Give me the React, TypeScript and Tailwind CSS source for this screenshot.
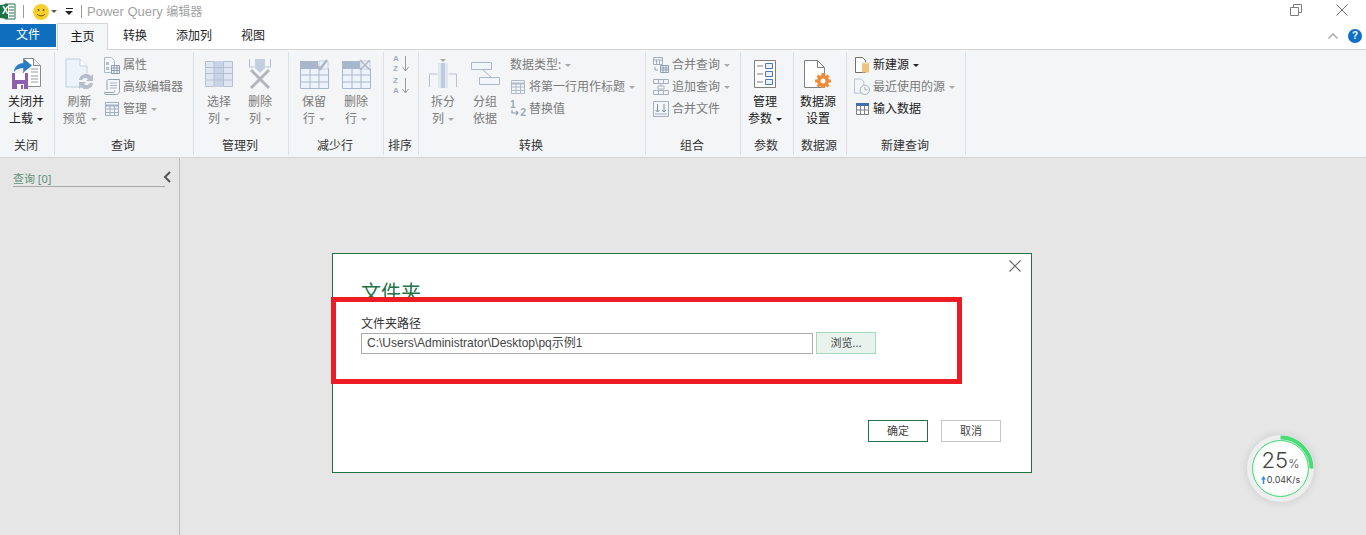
import type { ReactNode } from "react";

const cjk = "font-['Noto_Sans','Noto_Sans_CJK_SC',sans-serif]";

const Arrow = ({ dark }: { dark?: boolean }) => (
  <span
    className={`inline-block ml-[4px] align-middle w-0 h-0 border-x-[3px] border-x-transparent border-t-[3px] ${
      dark ? "border-t-[#222]" : "border-t-[#a9a9a9]"
    }`}
  />
);

// ---- ribbon icons ----
const CloseLoadIcon = () => (
  <svg width="29" height="31" viewBox="0 0 29 31">
    <path d="M11.500.5h10l7 7v21h-17z" fill="#fff" stroke="#8a8a8a" />
    <path d="M21.500.5v7h7" fill="#eee" stroke="#8a8a8a" />
    <path d="M19 11h7M19 14h7M19 18h7M19 21h7M19 24h7" stroke="#9a9a9a" />
    <path d="M2 14c0-5 4-9 10-9V1l8 6.500-8 6.500v-4c-4 0-8 1-10 4z" fill="#2a7cc4" />
    <path d="M0 15h16v16H0z" fill="#8d5fae" />
    <path d="M3 15h10v7H3z" fill="#fff" />
    <path d="M5 26h7v5H5z" fill="#fff" />
    <path d="M9 27h2v4H9z" fill="#8d5fae" />
  </svg>
);
const RefreshIcon = () => (
  <svg width="30" height="32" viewBox="0 0 30 32">
    <path d="M1 1h14l7 7v21H1z" fill="#edf3fb" stroke="#bfcfe2" />
    <path d="M15 1v7h7" fill="#fff" stroke="#bfcfe2" />
    <circle cx="21" cy="23" r="8" fill="#f3f5f7" />
    <path d="M14 22a7 7 0 0 1 12-4l2-2v7h-7l2-2a4 4 0 0 0-6 1zM28 25a7 7 0 0 1-12 4l-2 2v-7h7l-2 2a4 4 0 0 0 6-1z" fill="#b5bec9" />
  </svg>
);
const PropsIcon = () => (
  <svg width="16" height="17" viewBox="0 0 16 17">
    <path d="M.5.5h7l3 3v12h-10z" fill="#f4f7fb" stroke="#aab8cb" />
    <path d="M2 5h3v3H2zM2 10h3v3H2z" fill="#b4c0d0" />
    <path d="M7 8h9v9H7z" fill="#f4f7fb" />
    <path d="M7.500 8.500h8v8h-8zM7.500 11h8M7.500 13.500h8M10 8.500v8M13 8.500v8" fill="none" stroke="#8d9db3" />
  </svg>
);
const AdvEditorIcon = () => (
  <svg width="16" height="16" viewBox="0 0 16 16">
    <path d="M4.500.5h11v11c0 2-1 4-3 4h-11c-1 0-1-1-1-2h9c1 0 1-1 1-2" fill="#f4f7fb" stroke="#93a1b4" />
    <path d="M4.500.5C3 .5 3 2 3 3v8" fill="none" stroke="#93a1b4" />
    <path d="M6 4h7M6 6.500h7M6 9h7" stroke="#a8b4c4" />
  </svg>
);
const GridIcon = ({ stroke = "#a0aec2", fill = "#f2f5fa" }: { stroke?: string; fill?: string }) => (
  <svg width="14" height="14" viewBox="0 0 14 14">
    <path d="M.5.5h13v13H.5z" fill={fill} stroke={stroke} />
    <path d="M.5 3.500h13" stroke={stroke} strokeWidth="2" />
    <path d="M.5 7h13M.5 10.500h13M5 3v11M9.500 3v11" stroke={stroke} />
  </svg>
);
const ChooseColsIcon = () => (
  <svg width="28" height="26" viewBox="0 0 28 26">
    <path d="M.5.5h27v25H.5z" fill="#dfe6f1" stroke="#b5c1d3" />
    <path d="M9 0h10v26H9z" fill="#c8d4e6" />
    <path d="M.5 6.500h27M.5 12.500h27M.5 19h27M9 .5v25M18.500 .5v25" stroke="#b5c1d3" />
  </svg>
);
const RemoveColsIcon = () => (
  <svg width="22" height="30" viewBox="0 0 22 30">
    <path d="M.5 0v8h5M21.500 0v8h-5" fill="none" stroke="#b5c1d3" />
    <path d="M6 0h10v9l-5 5-5-5z" fill="#c3cfe0" />
    <path d="M2 29 20 11M2 11l18 18" stroke="#b1b6bd" strokeWidth="3" />
  </svg>
);
const RowsIcon = ({ mark }: { mark: "check" | "x" }) => (
  <svg width="29" height="30" viewBox="0 0 29 30">
    <path d="M.5 9.500h28v20H.500z" fill="#edf3fb" stroke="#a9b7cc" />
    <path d="M.5 16h28M.5 23h28M10 9.500v20M19 9.500v20" stroke="#a9b7cc" />
    <path d="M0 2h18v8H0z" fill="#a9b7cc" />
    <path d="M19 2h9v8h-9z" fill="#edf3fb" stroke="#c4cfde" />
    {mark === "check" ? (
      <path d="M16 6l4 4 7-9" fill="none" stroke="#aeb8c4" strokeWidth="2.500" />
    ) : (
      <path d="M18 1l10 10M28 1 18 11" stroke="#aeb8c4" strokeWidth="1.500" />
    )}
  </svg>
);
const SortIcon = ({ down }: { down?: boolean }) => (
  <div className="relative w-[16px] h-[16px]">
    <div className="-mt-[2px] text-[8px] leading-[9.5px] font-bold text-[#9fadc0] font-['Liberation_Sans',sans-serif]">
      <div>{down ? "Z" : "A"}</div>
      <div>{down ? "A" : "Z"}</div>
    </div>
    <svg width="7" height="16" viewBox="0 0 7 16" className="absolute left-[9px] top-0">
      <path d="M3.500 0v15M.5 11l3 4 3-4" fill="none" stroke="#9a9a9a" />
    </svg>
  </div>
);
const SplitIcon = () => (
  <svg width="28" height="29" viewBox="0 0 28 29">
    <path d="M.5 28V15h8M27.500 28V15h-8" fill="none" stroke="#b5c1d3" />
    <path d="M9 4h10v25H9z" fill="#dfe6f1" />
    <path d="M12 4h4v25h-4z" fill="#bfcbdd" />
    <path d="M11 0h6l-3 3z" fill="#a9a9a9" />
  </svg>
);
const GroupByIcon = () => (
  <svg width="29" height="25" viewBox="0 0 29 25">
    <path d="M.5 1.500h20v7H.5zM8.500 16.500h20v7h-20z" fill="#f2f6fb" stroke="#a9b7cc" />
    <path d="M12 9l8 7" stroke="#a9b7cc" />
  </svg>
);
const ReplaceIcon = () => (
  <div className="relative w-[16px] h-[18px] text-[#98a7bb] text-[10px] leading-none font-bold font-['Liberation_Sans',sans-serif]">
    <span className="absolute left-0 top-0">1</span>
    <span className="absolute right-0 bottom-0">2</span>
    <svg width="8" height="7" viewBox="0 0 8 7" className="absolute left-[1px] top-[10px]">
      <path d="M1 0v3h6M5 1l2 2-2 2" fill="none" stroke="#8ea0b6" strokeWidth="1.200" />
    </svg>
  </div>
);
const MergeIcon = () => (
  <svg width="16" height="16" viewBox="0 0 16 16">
    <path d="M.5.5h9v7h-9z" fill="#f2f5fa" stroke="#a3afbf" />
    <path d="M.5 3h9M3.500 3v5M6.500 3v5" stroke="#a3afbf" />
    <path d="M7.500 8.500h8v7h-8z" fill="#f2f5fa" stroke="#8fa0b6" />
    <path d="M7.500 11h8M7.500 13h8M10 9v6M13 9v6" stroke="#8fa0b6" />
    <path d="M2 10v3h3" fill="none" stroke="#8fa0b6" />
  </svg>
);
const AppendIcon = () => (
  <svg width="16" height="16" viewBox="0 0 16 16">
    <path d="M.5.5h15v4H.5zM.5 11.500h15v4H.5z" fill="#f2f5fa" stroke="#a3afbf" />
    <path d="M5.500.5v4M10.500.5v4M5.500 11.500v4M10.500 11.500v4" stroke="#a3afbf" />
    <path d="M5 7h6v3H5z" fill="#fff" stroke="#a3afbf" />
    <path d="M8 4v3" stroke="#a3afbf" />
  </svg>
);
const CombineFilesIcon = () => (
  <svg width="16" height="16" viewBox="0 0 16 16">
    <path d="M.5.5h15v15H.5z" fill="#f2f5fa" stroke="#a3afbf" />
    <path d="M4.500 3v8M2.500 9l2 2 2-2M11 3v8M9 9l2 2 2-2" fill="none" stroke="#7f90a7" />
    <path d="M2 13h12" stroke="#a3afbf" />
  </svg>
);
const ParamsIcon = () => (
  <svg width="22" height="28" viewBox="0 0 22 28">
    <path d="M.5.5h21v27H.5z" fill="#fff" stroke="#7f7f7f" />
    <path d="M3 6h6M3 14h6M3 22h6" stroke="#7f7f7f" />
    <path d="M11.500 3.500h7v5h-7zM11.500 11.500h7v5h-7zM11.500 19.500h7v5h-7z" fill="#eaf1fb" stroke="#4a7ab5" />
  </svg>
);
const DataSourceIcon = () => (
  <svg width="28" height="28" viewBox="0 0 28 28">
    <path d="M.5.5h13l7 7v20H.5z" fill="#fff" stroke="#7f7f7f" />
    <path d="M13.500.5v7h7" fill="none" stroke="#7f7f7f" />
    <circle cx="19" cy="21" r="6" fill="#ef8a35" />
    <path d="M19 13v16M11 21h16M13.500 15.500l11 11M24.500 15.500l-11 11" stroke="#ef8a35" strokeWidth="3" />
    <circle cx="19" cy="21" r="2.500" fill="#fff" />
  </svg>
);
const NewSourceIcon = () => (
  <svg width="15" height="16" viewBox="0 0 15 16">
    <path d="M.5.5h7l3 3v12h-10z" fill="#fff" stroke="#6f6f6f" />
    <path d="M7 6h7v9.500H7z" fill="#eec37c" />
    <path d="M7 6c1-1 6-1 7 0-1 1-6 1-7 0z" fill="#f6dfb0" />
  </svg>
);
const RecentIcon = () => (
  <svg width="17" height="18" viewBox="0 0 17 18">
    <path d="M.5.5h7l3 3v12h-10z" fill="#f2f6fb" stroke="#b4c0d0" />
    <circle cx="11.500" cy="12" r="5" fill="#f3f5f7" stroke="#a3afbf" />
    <path d="M11.500 9v3h3" fill="none" stroke="#a3afbf" />
  </svg>
);
const EnterDataIcon = () => (
  <svg width="13" height="12" viewBox="0 0 13 12">
    <path d="M.5.5h12v11H.5z" fill="#fff" stroke="#7f7f7f" />
    <path d="M0 0h13v3H0z" fill="#3f6fa8" />
    <path d="M.5 7h12M4.500 3v8M8.500 3v8" stroke="#7f7f7f" />
  </svg>
);

// ---- ribbon building blocks ----
const Large = ({
  icon,
  lines,
  width,
  arrow,
  dark,
}: {
  icon: ReactNode;
  lines: string[];
  width: string;
  arrow?: boolean;
  dark?: boolean;
}) => (
  <div className={`flex flex-col items-center shrink-0 pt-[3px] ${width}`}>
    <div className="h-[35px] flex items-center justify-center">{icon}</div>
    <div className={`mt-[2px] text-[12px] leading-[17px] text-center ${dark ? "text-[#222]" : "text-[#7a7a7a]"}`}>
      {lines.map((l, i) => (
        <div key={l} className="whitespace-nowrap">
          {l}
          {arrow && i === lines.length - 1 && <Arrow dark={dark} />}
        </div>
      ))}
    </div>
  </div>
);

const Small = ({
  icon,
  label,
  arrow,
  dark,
}: {
  icon?: ReactNode;
  label: string;
  arrow?: boolean;
  dark?: boolean;
}) => (
  <div className={`h-[22px] flex items-center text-[12px] whitespace-nowrap ${dark ? "text-[#222]" : "text-[#7a7a7a]"}`}>
    {icon && <div className="w-[16px] mr-[3px] flex justify-center">{icon}</div>}
    {label}
    {arrow && <Arrow dark={dark} />}
  </div>
);

const Col = ({ children, className = "" }: { children: ReactNode; className?: string }) => (
  <div className={`flex flex-col pt-[1px] ${className}`}>{children}</div>
);

const Group = ({ label, width, children }: { label: string; width: string; children: ReactNode }) => (
  <div className={`${width} shrink-0 flex flex-col border-r border-[#dcdfe3] my-[2px]`}>
    <div className="flex-1 flex pt-[1px]">{children}</div>
    <div className="h-[20px] pr-[2px] text-[12px] leading-[22px] text-center text-[#333]">{label}</div>
  </div>
);

export default function App() {
  return (
    <div className={`relative w-[1366px] h-[535px] overflow-hidden bg-[#e6e6e6] flex flex-col ${cjk}`}>
      {/* title bar */}
      <div className="h-[23px] bg-white flex items-center shrink-0">
        <svg width="17" height="17" viewBox="0 0 17 17" className="-ml-[1px]">
          <path d="M6 1h10v15H6z" fill="#fff" stroke="#217346" />
          <path d="M10 4h5M10 7h5M10 10h5M10 13h5" stroke="#217346" />
          <path d="M0 2l9-1v15l-9-1z" fill="#1f7244" />
        </svg>
        <span className="absolute left-[2px] top-[5px] text-[10px] leading-[12px] font-bold text-white font-['Liberation_Sans',sans-serif]">
          X
        </span>
        <div className="ml-[7px] w-px h-[13px] bg-[#9a9a9a]" />
        <svg width="16" height="16" viewBox="0 0 16 16" className="ml-[9px]">
          <circle cx="8" cy="8" r="8" fill="#f8cf2c" />
          <circle cx="5.500" cy="6" r="1" fill="#6b5410" />
          <circle cx="10.500" cy="6" r="1" fill="#6b5410" />
          <path d="M4 10c2 2.500 6 2.500 8 0" fill="none" stroke="#6b5410" />
        </svg>
        <span className="ml-[2px] w-0 h-0 border-x-[3px] border-x-transparent border-t-[3px] border-t-[#555]" />
        <div className="ml-[8px] flex flex-col items-center gap-[2px]">
          <div className="w-[7px] h-px bg-[#222]" />
          <span className="w-0 h-0 border-x-[4px] border-x-transparent border-t-[4px] border-t-[#222]" />
        </div>
        <div className="ml-[8px] w-px h-[13px] bg-[#9a9a9a]" />
        <div className="ml-[5px] text-[12px] text-[#a3a3a3] font-['Liberation_Sans','Noto_Sans_CJK_SC',sans-serif]">
          <span className="text-[13px]">Power Query</span> 编辑器
        </div>
        <svg width="12" height="12" viewBox="0 0 12 12" className="absolute left-[1290px] top-[4px]">
          <path d="M.5 3.500h8v8h-8zM3.500 3V.5h8v8H9" fill="none" stroke="#7a7a7a" />
        </svg>
        <svg width="12" height="12" viewBox="0 0 12 12" className="absolute left-[1336px] top-[4px]">
          <path d="M.5.5l11 11M11.500.5l-11 11" stroke="#6f6f6f" />
        </svg>
      </div>

      {/* tabs */}
      <div className="h-[27px] bg-white flex items-start border-b border-[#d5d5d5] shrink-0 text-[12px] relative">
        <div className="w-[56px] h-[23px] mt-px bg-[#106ebe] text-white text-center leading-[22px]">文件</div>
        <div className="ml-px w-[51px] h-[27px] bg-[#f3f5f7] border border-b-0 border-[#d5d5d5] text-center leading-[26px] text-[#111]">
          主页
        </div>
        <div className="w-[54px] text-center leading-[26px] text-[#222]">转换</div>
        <div className="w-[64px] text-center leading-[26px] text-[#222]">添加列</div>
        <div className="w-[54px] text-center leading-[26px] text-[#222]">视图</div>
        <svg width="10" height="6" viewBox="0 0 10 6" className="absolute left-[1328px] top-[10px]">
          <path d="M.5 5.500 5 1l4.500 4.500" fill="none" stroke="#a3a3a3" strokeWidth="1.300" />
        </svg>
        <div className="absolute left-[1348px] top-[6px] w-[14px] h-[14px] rounded-full bg-[#0f6fc6] text-white text-[10px] leading-[14px] font-bold text-center font-['Liberation_Sans',sans-serif]">
          ?
        </div>
      </div>

      {/* ribbon */}
      <div className="h-[108px] bg-[#f3f5f7] border-b border-[#d5d5d5] flex shrink-0">
        <Group label="关闭" width="w-[55px]">
          <Large dark width="w-[52px]" icon={<CloseLoadIcon />} lines={["关闭并", "上载"]} arrow />
        </Group>
        <Group label="查询" width="w-[139px]">
          <Large width="w-[49px]" icon={<RefreshIcon />} lines={["刷新", "预览"]} arrow />
          <Col>
            <Small icon={<PropsIcon />} label="属性" />
            <Small icon={<AdvEditorIcon />} label="高级编辑器" />
            <Small icon={<GridIcon />} label="管理" arrow />
          </Col>
        </Group>
        <Group label="管理列" width="w-[95px]">
          <Large width="w-[50px]" icon={<ChooseColsIcon />} lines={["选择", "列"]} arrow />
          <Large width="w-[32px]" icon={<RemoveColsIcon />} lines={["删除", "列"]} arrow />
        </Group>
        <Group label="减少行" width="w-[95px]">
          <Large width="w-[50px]" icon={<RowsIcon mark="check" />} lines={["保留", "行"]} arrow />
          <Large width="w-[34px]" icon={<RowsIcon mark="x" />} lines={["删除", "行"]} arrow />
        </Group>
        <Group label="排序" width="w-[35px]">
          <div className="flex flex-col items-center gap-[6px] w-full pt-[3px]">
            <SortIcon />
            <SortIcon down />
          </div>
        </Group>
        <Group label="转换" width="w-[227px]">
          <Large width="w-[48px]" icon={<SplitIcon />} lines={["拆分", "列"]} arrow />
          <Large width="w-[36px]" icon={<GroupByIcon />} lines={["分组", "依据"]} />
          <Col className="ml-[7px]">
            <Small label="数据类型:" arrow />
            <Small icon={<GridIcon stroke="#b0b9c6" />} label="将第一行用作标题" arrow />
            <Small icon={<ReplaceIcon />} label="替换值" />
          </Col>
        </Group>
        <Group label="组合" width="w-[95px]">
          <Col className="ml-[7px]">
            <Small icon={<MergeIcon />} label="合并查询" arrow />
            <Small icon={<AppendIcon />} label="追加查询" arrow />
            <Small icon={<CombineFilesIcon />} label="合并文件" />
          </Col>
        </Group>
        <Group label="参数" width="w-[53px]">
          <Large dark width="w-[48px]" icon={<ParamsIcon />} lines={["管理", "参数"]} arrow />
        </Group>
        <Group label="数据源" width="w-[53px]">
          <Large dark width="w-[48px]" icon={<DataSourceIcon />} lines={["数据源", "设置"]} />
        </Group>
        <Group label="新建查询" width="w-[119px]">
          <Col className="ml-[7px]">
            <Small dark icon={<NewSourceIcon />} label="新建源" arrow />
            <Small icon={<RecentIcon />} label="最近使用的源" arrow />
            <Small dark icon={<EnterDataIcon />} label="输入数据" />
          </Col>
        </Group>
      </div>

      {/* body */}
      <div className="flex-1 flex">
        <div className="w-[180px] border-r border-[#bdbdbd] pl-[13px] pr-[14px] pt-[14px]">
          <div className="h-[15px] border-b border-[#a9a9a9] flex justify-between items-start relative">
            <span className="text-[11px] leading-[14px] text-[#5d9279]">查询 [0]</span>
            <svg width="8" height="12" viewBox="0 0 8 12" className="absolute right-[-6px] top-[-1px]">
              <path d="M7 1 2 6l5 5" fill="none" stroke="#555" strokeWidth="2" />
            </svg>
          </div>
        </div>
      </div>

      {/* dialog */}
      <div className="absolute left-[332px] top-[253px] w-[700px] h-[220px] bg-white border border-[#217346] pl-[28px] pr-[30px]">
        <svg width="12" height="12" viewBox="0 0 12 12" className="absolute right-[10px] top-[6px]">
          <path d="M.5.5l11 11M11.500.5l-11 11" stroke="#666" strokeWidth="1.100" />
        </svg>
        <div className="pt-[26px] h-[60px] text-[20px] leading-[26px] text-[#217346]">文件夹</div>
        <div className="mt-[2px] text-[12px] leading-[16px] text-[#333]">文件夹路径</div>
        <div className="flex mt-[1px] gap-[3px]">
          <div className="w-[452px] h-[21px] border border-[#ababab] pl-[5px] text-[12px] leading-[19px] text-[#444] font-['Liberation_Sans','Noto_Sans_CJK_SC',sans-serif]">
            {"C:\\Users\\Administrator\\Desktop\\pq示例1"}
          </div>
          <div className="w-[60px] h-[22px] -mt-px bg-[#e9f3ee] border border-[#a6d8bc] text-center text-[11px] leading-[20px] text-[#444]">
            浏览...
          </div>
        </div>
        <div className="flex justify-end gap-[13px] mt-[66px]">
          <div className="w-[60px] h-[22px] border border-[#217346] text-center text-[11px] leading-[20px] text-[#444]">确定</div>
          <div className="w-[60px] h-[22px] border border-[#c6c6c6] text-center text-[11px] leading-[20px] text-[#444]">取消</div>
        </div>
      </div>

      {/* red annotation */}
      <div className="absolute left-[331px] top-[297px] w-[631px] h-[87px] border-[5px] border-[#ed1c24]" />

      {/* speed widget */}
      <div className="absolute left-[1247px] top-[435px] w-[67px] h-[67px] rounded-full bg-[#eeeeee] shadow-[0_0_8px_rgba(0,0,0,0.12)]">
        <svg width="67" height="67" viewBox="0 0 67 67" className="absolute inset-0">
          <path d="M33.500 2.500a31 31 0 0 1 31 31" fill="none" stroke="#45dd74" strokeWidth="4" />
        </svg>
        <div className="absolute left-[5px] top-[5px] w-[57px] h-[57px] rounded-full bg-[radial-gradient(circle,#ffffff_55%,#e3f9e9_100%)] border border-[#3ddc6f] flex flex-col items-center font-['Inter',sans-serif]">
          <div className="mt-[7px] h-[24px] text-[#444] leading-[24px] font-light">
            <span className="text-[22px]">25</span>
            <span className="text-[12px]">%</span>
          </div>
          <div className="mt-[3px] flex items-center text-[9px] leading-[10px] text-[#444] whitespace-nowrap">
            <svg width="5" height="8" viewBox="0 0 5 8" className="mr-px">
              <path d="M2.500 0 5 3.500H3.300V8H1.700V3.500H0z" fill="#2b8fe8" />
            </svg>
            0.04K/s
          </div>
        </div>
      </div>
    </div>
  );
}
